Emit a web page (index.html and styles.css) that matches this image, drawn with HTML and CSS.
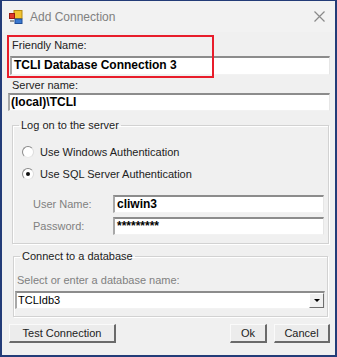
FILE: index.html
```html
<!DOCTYPE html>
<html lang="en">
<head>
    <meta charset="UTF-8">
    <title>Add Connection</title>
    <link rel="stylesheet" href="styles.css">
</head>
<body>
    <div class="window">
        <div class="titlebar">
            <svg class="app-icon" width="14" height="14" viewBox="0 0 14 14">
                <rect x="5" y="0.5" width="8" height="8" fill="#f2c230" stroke="#b58a10" stroke-width="1"/>
                <rect x="0.5" y="3.5" width="5" height="5" fill="#e03a2a" stroke="#9a1a10" stroke-width="1"/>
                <rect x="6" y="9" width="7" height="4.5" fill="#3a78d0" stroke="#1f4d96" stroke-width="1"/>
                <rect x="1" y="10" width="4" height="2" fill="#9a9a9a"/>
            </svg>
            <span class="title">Add Connection</span>
            <svg class="close" width="11" height="11" viewBox="0 0 11 11">
                <path d="M0.5 0.5 L10.5 10.5 M10.5 0.5 L0.5 10.5" stroke="#8a8a8a" stroke-width="1.2"/>
            </svg>
        </div>

        <div class="content">
            <div class="highlight"></div>

            <div class="label">Friendly Name:</div>
            <div class="textbox friendly">TCLI Database Connection 3</div>

            <div class="label">Server name:</div>
            <div class="textbox server">(local)\TCLI</div>

            <fieldset class="group logon">
                <legend>Log on to the server</legend>
                <div class="radio-row first">
                    <span class="radio"></span>
                    <span>Use Windows Authentication</span>
                </div>
                <div class="radio-row">
                    <span class="radio checked"></span>
                    <span>Use SQL Server Authentication</span>
                </div>
                <div class="field-row first">
                    <span class="field-label">User Name:</span>
                    <div class="textbox field">cliwin3</div>
                </div>
                <div class="field-row">
                    <span class="field-label">Password:</span>
                    <div class="textbox field">*********</div>
                </div>
            </fieldset>

            <fieldset class="group database">
                <legend>Connect to a database</legend>
                <div class="label db-label">Select or enter a database name:</div>
                <div class="textbox combo">
                    <span>TCLIdb3</span>
                    <span class="drop-btn"><span class="arrow"></span></span>
                </div>
            </fieldset>

            <div class="buttons">
                <div class="btn test">Test Connection</div>
                <div class="spacer"></div>
                <div class="btn ok">Ok</div>
                <div class="btn cancel">Cancel</div>
            </div>
        </div>
    </div>
</body>
</html>
```

FILE: styles.css
```css
* {
    margin: 0;
    padding: 0;
    box-sizing: border-box;
}

body {
    font-family: 'Liberation Sans', Arial, sans-serif;
    font-size: 11px;
    color: #000;
    background: #fff;
}

.window {
    width: 337px;
    height: 357px;
    background: #f0f0f0;
    border: 2px solid #233c78;
    border-top-width: 1px;
}

.titlebar {
    height: 31px;
    display: flex;
    align-items: center;
    padding: 0 0 0 7px;
    background: #f2f2f2;
}

.app-icon {
    margin-top: 1px;
}

.title {
    margin-left: 7px;
    font-size: 12px;
    color: #808080;
}

.close {
    margin-left: auto;
    margin-right: 10px;
}

.content {
    position: relative;
    padding: 7px 5px 0 6px;
}

.highlight {
    position: absolute;
    left: 5px;
    top: 3px;
    width: 207px;
    height: 43px;
    border: 2px solid #e81d2b;
}

.label {
    line-height: 13px;
    color: #222;
    padding-left: 4px;
}

.textbox {
    height: 19px;
    background: #fff;
    border-style: solid;
    border-width: 2px 1px 1px 2px;
    border-color: #8c8c8c #e6e6e6 #f2f2f2 #a8a8a8;
    font-weight: bold;
    font-size: 12px;
    line-height: 15px;
    padding-left: 2px;
    white-space: nowrap;
}

.friendly {
    margin: 4px 0 4px 2px;
}

.server {
    height: 18px;
    margin-top: 1px;
    padding-left: 1px;
    line-height: 14px;
}

.group {
    border: 1px solid #d2d2d2;
    box-shadow: inset 1px 1px 0 #fff, 1px 1px 0 #fff;
    margin-left: 3px;
    margin-right: 1px;
    padding: 0 4px 8px 5px;
}

.group legend {
    padding: 0 2px;
    line-height: 13px;
    color: #222;
    margin-left: 1px;
}

.logon {
    margin-top: 8px;
    margin-left: 4px;
}

.radio-row {
    display: flex;
    align-items: center;
    height: 18px;
    margin-top: 4px;
    padding-left: 4px;
    color: #222;
}

.radio-row.first {
    margin-top: 11px;
}

.radio {
    width: 12px;
    height: 12px;
    border-radius: 50%;
    background: #fff;
    border: 1px solid;
    border-color: #8a8a8a #dcdcdc #e8e8e8 #8a8a8a;
    margin-right: 6px;
    display: flex;
    align-items: center;
    justify-content: center;
}

.radio.checked::after {
    content: "";
    width: 4px;
    height: 4px;
    border-radius: 50%;
    background: #111;
}

.field-row {
    display: flex;
    align-items: center;
    margin-top: 4px;
}

.field-row.first {
    margin-top: 12px;
}

.field-label {
    flex: 0 0 95px;
    padding-left: 15px;
    color: #808080;
}

.textbox.field {
    flex: 1;
    height: 18px;
    line-height: 14px;
}

.database {
    margin-top: 6px;
    margin-left: 5px;
    margin-right: 2px;
    padding: 0 2px 7px 1px;
}

.database legend {
    margin-left: 5px;
}

.db-label {
    margin-top: 11px;
    padding-left: 2px;
    color: #808080;
}

.textbox.combo {
    display: flex;
    align-items: center;
    height: 18px;
    margin-top: 4px;
    font-weight: normal;
    font-size: 11px;
    padding-left: 1px;
}

.drop-btn {
    margin-left: auto;
    width: 15px;
    height: 15px;
    background: #f0f0f0;
    border: 1px solid;
    border-color: #fff #6e6e6e #6e6e6e #fff;
    display: flex;
    align-items: center;
    justify-content: center;
}

.arrow {
    width: 0;
    height: 0;
    border-left: 3px solid transparent;
    border-right: 3px solid transparent;
    border-top: 3px solid #000;
}

.buttons {
    display: flex;
    margin-top: 7px;
    padding-left: 1px;
    gap: 7px;
}

.spacer {
    flex: 1;
}

.btn {
    height: 19px;
    background: #ececec;
    border-style: solid;
    border-width: 1px 2px 2px 1px;
    border-color: #fafafa #6a6a6a #6a6a6a #fafafa;
    font-size: 11px;
    color: #222;
    display: flex;
    align-items: center;
    justify-content: center;
}

.test {
    width: 107px;
}

.ok {
    width: 37px;
}

.cancel {
    width: 56px;
}
```
